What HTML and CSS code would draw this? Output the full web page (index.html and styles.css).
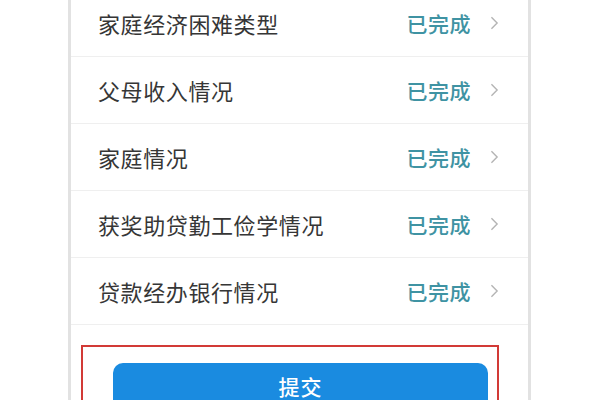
FILE: index.html
```html
<!DOCTYPE html>
<html lang="zh-CN">
<head>
<meta charset="utf-8">
<title>申请信息</title>
<link rel="stylesheet" href="styles.css">
</head>
<body>
<div class="phone">
  <ul class="list">
    <li class="row"><span class="label">家庭经济困难类型</span><span class="status">已完成</span><svg class="chev" viewBox="0 0 10 16"><path d="M1.5 1.5 L8 8 L1.5 14.5"/></svg></li>
    <li class="row"><span class="label">父母收入情况</span><span class="status">已完成</span><svg class="chev" viewBox="0 0 10 16"><path d="M1.5 1.5 L8 8 L1.5 14.5"/></svg></li>
    <li class="row"><span class="label">家庭情况</span><span class="status">已完成</span><svg class="chev" viewBox="0 0 10 16"><path d="M1.5 1.5 L8 8 L1.5 14.5"/></svg></li>
    <li class="row"><span class="label">获奖助贷勤工俭学情况</span><span class="status">已完成</span><svg class="chev" viewBox="0 0 10 16"><path d="M1.5 1.5 L8 8 L1.5 14.5"/></svg></li>
    <li class="row"><span class="label">贷款经办银行情况</span><span class="status">已完成</span><svg class="chev" viewBox="0 0 10 16"><path d="M1.5 1.5 L8 8 L1.5 14.5"/></svg></li>
  </ul>
  <div class="highlight">
    <button class="submit" type="button">提交</button>
  </div>
</div>
</body>
</html>
```
FILE: styles.css
```css
html, body {
  margin: 0;
  padding: 0;
  background: #ffffff;
  height: 400px;
  overflow: hidden;
}
body {
  font-family: "Noto Sans CJK SC", "Noto Sans", sans-serif;
}
.phone {
  margin-left: 68px;
  width: 457px;
  height: 420px;
  border-left: 3px solid #e2e2e2;
  border-right: 3px solid #e2e2e2;
  margin-top: -10px;
  background: #fff;
}
.list {
  list-style: none;
  margin: 0;
  padding: 0;
}
.row {
  display: flex;
  align-items: center;
  height: 66px;
  border-bottom: 1px solid #efefef;
  padding: 0 29px 0 27px;
}
.label {
  flex: 1;
  font-size: 22px;
  color: #363636;
  letter-spacing: 0.6px;
}
.status {
  font-size: 21px;
  font-weight: 500;
  color: #3f93a3;
  letter-spacing: 0.5px;
  margin-right: 19px;
}
.chev {
  width: 9px;
  height: 14px;
  fill: none;
  stroke: #b4b4b4;
  stroke-width: 1.6;
}
.highlight {
  margin: 20px 29px 0 10px;
  border: 2px solid #d23a36;
  padding: 16px 9px 0 30px;
}
.submit {
  display: block;
  width: 100%;
  height: 46px;
  border: none;
  border-radius: 10px;
  background: #1a8be0;
  color: #fff;
  font-family: "Noto Sans CJK SC", "Noto Sans", sans-serif;
  font-size: 21px;
  font-weight: 500;
  letter-spacing: 1px;
}
```
